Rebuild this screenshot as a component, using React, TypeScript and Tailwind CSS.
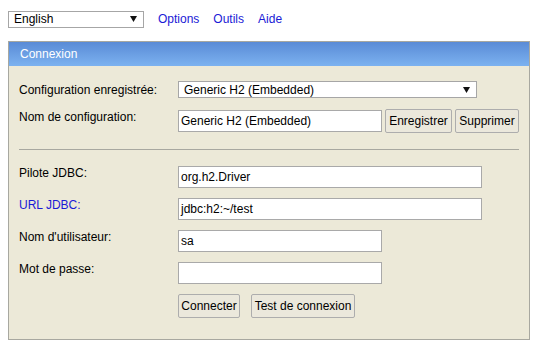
const font = { fontFamily: '"Liberation Sans", Arial, sans-serif' };

function Arrow() {
  return (
    <svg width="7" height="6" viewBox="0 0 7 6" className="shrink-0">
      <path d="M0 0 H7 L3.5 6 Z" fill="#111" />
    </svg>
  );
}

function Select({ value, w }: { value: string; w: string }) {
  return (
    <div className={`flex h-[17px] items-center justify-between border border-[#a6a6a6] bg-white pl-[5px] pr-[6px] text-[12px] text-black ${w}`}>
      <span>{value}</span>
      <Arrow />
    </div>
  );
}

function Input({ value = "", w }: { value?: string; w: string }) {
  return (
    <div className={`flex h-[22px] items-center border border-[#a9a9a9] bg-white pl-[2px] text-[12px] text-black ${w}`}>
      {value}
    </div>
  );
}

function Btn({ children, w }: { children: string; w: string }) {
  return (
    <button className={`flex h-[24px] items-center justify-center rounded-[2px] border border-[#adadad] bg-[#ebe8dc] text-[12px] text-black ${w}`}>
      {children}
    </button>
  );
}

function Row({ label, blue, children, className = "" }: { label: string; blue?: boolean; children: React.ReactNode; className?: string }) {
  return (
    <div className={`flex ${className}`}>
      <div className={`w-[159px] text-[12px] leading-[14px] ${blue ? "text-[#1a1ad6]" : "text-black"}`}>{label}</div>
      <div className="flex gap-[3px]">{children}</div>
    </div>
  );
}

export default function App() {
  return (
    <div className="h-[362px] w-[547px] bg-white" style={font}>
      <div className="flex items-center pl-[8px] pt-[10px]">
        <Select value="English" w="w-[136px]" />
        <nav className="ml-[14px] flex gap-[14px] text-[12px] text-[#1a1ad6]">
          <a>Options</a>
          <a>Outils</a>
          <a>Aide</a>
        </nav>
      </div>

      <div className="ml-[8px] mt-[13px] h-[299px] w-[522px] border border-[#a8a8a0] bg-[#ece9d8]">
        <div className="flex h-[24px] items-center bg-gradient-to-b from-[#5a8bd6] to-[#7cb2f0] pl-[11px] text-[12px] text-white">
          Connexion
        </div>
        <div className="px-[10px] pt-[15px]">
          <Row label="Configuration enregistrée:" className="items-center">
            <Select value="Generic H2 (Embedded)" w="w-[299px]" />
          </Row>
          <Row label="Nom de configuration:" className="mt-[11px] [&>div:first-child]:pt-[1px]">
            <div className="pt-[1px]">
              <Input value="Generic H2 (Embedded)" w="w-[204px]" />
            </div>
            <Btn w="w-[67px]">Enregistrer</Btn>
            <Btn w="w-[64px]">Supprimer</Btn>
          </Row>
          <div className="mt-[16px] h-px w-[500px] bg-[#a8a8a0]" />
          <Row label="Pilote JDBC:" className="mt-[16px]">
            <Input value="org.h2.Driver" w="w-[304px]" />
          </Row>
          <Row label="URL JDBC:" blue className="mt-[10px]">
            <Input value="jdbc:h2:~/test" w="w-[304px]" />
          </Row>
          <Row label="Nom d'utilisateur:" className="mt-[10px]">
            <Input value="sa" w="w-[204px]" />
          </Row>
          <Row label="Mot de passe:" className="mt-[10px]">
            <Input w="w-[204px]" />
          </Row>
          <div className="mt-[10px] flex pl-[159px] gap-[11px]">
            <Btn w="w-[62px]">Connecter</Btn>
            <Btn w="w-[104px]">Test de connexion</Btn>
          </div>
        </div>
      </div>
    </div>
  );
}
